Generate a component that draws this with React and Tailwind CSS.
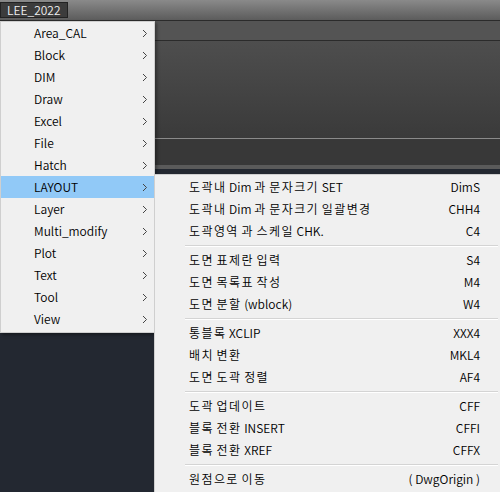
import React from 'react';

const FONT = { fontFamily: '"Noto Sans CJK KR", "Noto Sans", sans-serif' };

const MAIN = ['Area_CAL', 'Block', 'DIM', 'Draw', 'Excel', 'File', 'Hatch', 'LAYOUT', 'Layer', 'Multi_modify', 'Plot', 'Text', 'Tool', 'View'];

const SUB = [
  [
    ['도곽내 Dim 과 문자크기 SET', 'DimS'],
    ['도곽내 Dim 과 문자크기 일괄변경', 'CHH4'],
    ['도곽영역 과 스케일 CHK.', 'C4'],
  ],
  [
    ['도면 표제란 입력', 'S4'],
    ['도면 목록표 작성', 'M4'],
    ['도면 분할 (wblock)', 'W4'],
  ],
  [
    ['통블록 XCLIP', 'XXX4'],
    ['배치 변환', 'MKL4'],
    ['도면 도곽 정렬', 'AF4'],
  ],
  [
    ['도곽 업데이트', 'CFF'],
    ['블록 전환 INSERT', 'CFFI'],
    ['블록 전환 XREF', 'CFFX'],
  ],
  [['원점으로 이동', '( DwgOrigin )']],
];

// 한글은 자간을 조금 넓힘 (맑은 고딕 느낌)
function Label({ text }) {
  return (
    <span className="flex-1 whitespace-pre">
      {text.split(/([가-힣]+)/).map((part, i) =>
        /[가-힣]/.test(part) ? (
          <span key={i} className="tracking-[1.4px]">{part}</span>
        ) : (
          <span key={i}>{part}</span>
        )
      )}
    </span>
  );
}

function Chevron() {
  return (
    <svg width="6" height="9" viewBox="0 0 6 9" className="shrink-0">
      <path d="M1 1 L4.5 4.5 L1 8" fill="none" stroke="#444" strokeWidth="1" />
    </svg>
  );
}

export default function App() {
  return (
    <div className="relative w-[500px] h-[492px] overflow-hidden bg-[#232831] text-[12px] font-[350]" style={FONT}>
      {/* 배경 툴바 */}
      <div className="flex flex-col">
        <div className="h-[20px] bg-gradient-to-b from-[#8a8a8a] to-[#5c5c5c] flex items-start pt-[2px]">
          <div className="h-[16px] px-[6px] bg-[#3c3c3c] border border-[#222] text-[#eee] leading-[14px] text-[12px]">LEE_2022</div>
        </div>
        <div className="h-[1px] bg-[#2b2b2b]" />
        <div className="h-[19px] bg-[#545454]" />
        <div className="h-[1px] bg-[#2b2b2b]" />
        <div className="h-[97px] bg-gradient-to-b from-[#4e4e4e] to-[#3a3a3a]" />
        <div className="h-[1px] bg-[#8a8a8a]" />
        <div className="h-[26px] bg-[#383838]" />
        <div className="h-[4px] bg-[#5a5a5a]" />
      </div>

      {/* 메인 메뉴 */}
      <div className="absolute left-0 top-[21px] w-[155px] bg-[#f0f0f0] border border-[#cfcfcf] pb-[2px] shadow-[2px_2px_3px_rgba(0,0,0,0.35)]">
        {MAIN.map((m) => (
          <div
            key={m}
            className={`h-[22px] flex items-center pl-[33px] pr-[6px] text-black ${m === 'LAYOUT' ? 'bg-[#91c9f7]' : ''}`}
          >
            <span className="flex-1">{m}</span>
            <Chevron />
          </div>
        ))}
      </div>

      {/* 서브 메뉴 */}
      <div className="absolute left-[154px] top-[174px] w-[350px] h-[330px] bg-[#f0f0f0] border border-[#cfcfcf] pt-[1px]">
        {SUB.map((group, gi) => (
          <div key={gi}>
            {gi > 0 && (
              <div className="h-[7px] flex items-center pl-[30px] pr-[5px] pt-[1px]">
                <div className="h-[2px] w-full border-t border-[#d4d4d4] border-b border-b-white" />
              </div>
            )}
            {group.map(([label, key]) => (
              <div key={label} className="h-[22px] flex items-center pl-[34px] pr-[23px] text-black">
                <Label text={label} />
                <span>{key}</span>
              </div>
            ))}
          </div>
        ))}
      </div>
    </div>
  );
}
